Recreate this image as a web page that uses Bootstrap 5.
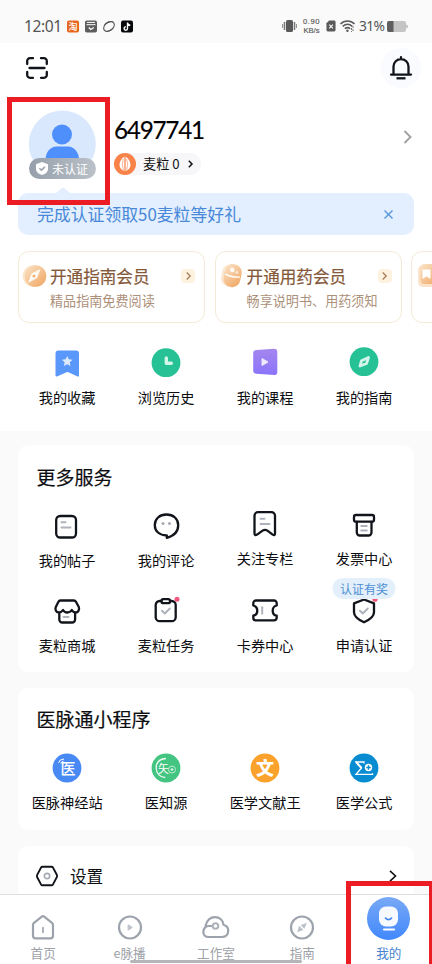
<!DOCTYPE html>
<html lang="zh-CN">
<head>
<meta charset="utf-8">
<meta name="viewport" content="width=device-width, initial-scale=1">
<title>我的</title>
<link href="https://cdn.jsdelivr.net/npm/bootstrap@5.3.0/dist/css/bootstrap.min.css" rel="stylesheet">
<style>
body{font-family:"Noto Sans CJK SC",sans-serif;color:#0c0d10;background:#fff;font-size:14.2px;line-height:20px}
svg{display:block;flex:none;overflow:visible}
.screen{width:432px;height:964px}
.statusbar{height:43px;background:#fafafa;color:#555;font-family:"Noto Sans",sans-serif;padding:9px 24px 0}
.clock{font-size:15.6px;width:41px;letter-spacing:-.4px}
.speed{font-family:"Liberation Sans",sans-serif;font-size:7.6px;width:21px;-webkit-text-stroke:.15px #555}
.speed div{line-height:9px;height:9px}
.speed .rate{letter-spacing:.6px}
.pct{font-size:13.8px;letter-spacing:-.6px;width:28px}
.account{height:388px;padding:0 18px}
.toolbar{height:54px;padding:5px 0 0 8px}
.scan{margin-top:9px}
.bell{width:40px;height:40px;background:#fafbff;margin-right:-7px}
.profile{height:96px;padding-top:13px}
.avatar{width:68px;height:70px;margin-left:10px}
.verify{left:1px;bottom:1px;width:67px;height:21px;border-radius:11px;background:linear-gradient(90deg,#969fab,#bbc1c8);font-size:12px;padding-left:7px}
.who{padding:4px 0 0 18px}
.uid{font-family:Lato,sans-serif;font-size:24.3px;line-height:30px;letter-spacing:-1.25px;color:#000;-webkit-text-stroke:.15px #000;margin-top:1px}
.grains{width:87px;height:22px;background:#f7f7fa;font-size:13.2px;border-radius:11px;margin:8px 0 0;color:#111}
.grains .amount{margin-left:7px}
.more{margin:20px 2px 0 0}
.notice{height:42px;border-radius:10px;background:#e3effe;color:#4888d8;font-size:16.85px;padding:0 17px 0 19px}
.notice-tip{left:37px;top:-6px}
.plans{height:72px;margin-top:16px;margin-right:-18px;gap:9.6px}
.plan{width:187px;height:72px;border:1px solid #f4ead8;border-radius:11px;padding:14px 9px 0 3px}
.plan-icon{margin-top:-2px}
.plan-text{margin-left:2px}
.plan-title{font-size:16.6px;line-height:22px;color:#85583a;font-weight:400;-webkit-text-stroke:.2px #85583a;margin-top:-1px}
.plan-sub{font-size:13.1px;line-height:20px;margin-top:4px;color:#ad907a}
.go{width:14px;height:14px;border-radius:4px;background:#fdf1e0;margin-top:3px}
.tiles{margin-left:-.4px;margin-right:.4px}
.tile{height:60px}
.tile .pic{width:30px;height:30px}
.tile .cap{margin-top:9px;white-space:nowrap}
.quick{margin-top:25px}
.lift{margin-top:-2px}
.feed{background:#fafafa;padding:14px 18px 0}
.panel{background:#fff;border-radius:11px;margin-bottom:16px}
.panel-title{font-size:19px;line-height:24px;font-weight:400;margin:0;padding-left:18.5px;-webkit-text-stroke:.2px #111}
.services{height:227px;padding-top:20px}
.services .tiles{margin-top:22px;row-gap:25px}
.minis{height:142px;padding-top:19px}
.minis .tiles{margin-top:22px}
.prize{top:-18px;left:50%;transform:translateX(-50%);width:63px;height:21px;border-radius:11px;background:#e3effb;color:#4d90d2;font-size:12px;white-space:nowrap}
.setting{height:60px;padding:0 17px 0 18px;font-size:16.6px}
.tabs{height:70px;border-top:1px solid #dcdee1;color:#9da1a8;font-size:12.6px}
.tab-item{width:20%;padding-top:18px}
.tab-item .cap{margin-top:1px;line-height:20px}
.tab-item.on{padding-top:2px;color:#4784cf}
.tab-item.on .cap{margin-top:3px}
.homebar{left:130px;bottom:1px;width:172px;height:3px;border-radius:2px;background:#b4b5b6}
.frame{border:5px solid #eb1c24}
.frame-a{left:7px;top:97px;width:103px;height:108px}
.frame-b{left:346px;top:881px;width:88px;height:90px}
.ln{fill:none;stroke:#11141a;stroke-width:2.3;stroke-linecap:round;stroke-linejoin:round}
.ln.thin{stroke-width:1.9}
.gl{fill:none;stroke:#aeb2bb;stroke-width:2;stroke-linecap:round;stroke-linejoin:round}
.tl{fill:none;stroke:#9da3ad;stroke-width:2.2;stroke-linecap:round;stroke-linejoin:round}
</style>
<script src="https://cdn.jsdelivr.net/npm/bootstrap@5.3.0/dist/js/bootstrap.bundle.min.js"></script>
</head>
<body>
<div class="screen d-flex flex-column position-relative overflow-hidden">

  <header class="statusbar d-flex align-items-center justify-content-between flex-shrink-0">
    <div class="d-flex align-items-center">
      <span class="clock">12:01</span>
      <svg class="ms-1" width="70" height="13" viewBox="0 0 70 13">
        <rect x="-2" y="0.5" width="12" height="12" rx="2" fill="#e8661c"/>
        <text x="-.4" y="10" font-size="9" fill="#fff" font-family="Noto Sans CJK SC" font-weight="500">淘</text>
        <rect x="16" y=".5" width="12" height="12" rx="1.8" fill="#5d5d5d"/><path d="M18 2.4h8M17.5 4.7h9" stroke="#fff" stroke-width="1"/><path d="M19.8 7.5l2 2 3-2" fill="none" stroke="#fff" stroke-width="1.3"/>
        <ellipse cx="40" cy="6.5" rx="6" ry="4" transform="rotate(-38 40 6.500)" fill="none" stroke="#555" stroke-width="1.100"/><path d="M34.500 6C36 2.500 40 .5 44.500 1.300 40.500 2.300 37 3.500 34.500 6zM45.500 6.500C44 10.500 40 12.500 35.500 11.700 39.500 10.800 43 9.300 45.500 6.500z" fill="#555"/>
        <rect x="52" y=".5" width="12" height="12" rx="2" fill="#07080b"/><path d="M58.500 2.500v6a1.700 1.700 0 1 1-1.700-1.700M58.500 2.800c.3 1.500 1.300 2.300 2.800 2.500" fill="none" stroke="#fff" stroke-width="1.400"/>
      </svg>
    </div>
    <div class="d-flex align-items-center">
      <svg class="me-1" width="15" height="12" viewBox="0 0 15 12"><rect x="4" width="7" height="12" rx="1.600" fill="#5a5a5a"/><path d="M2.500 2v8M12.500 2v8" stroke="#777" stroke-width="1.500"/><path d="M.6 4v4M14.400 4v4" stroke="#888" stroke-width="1"/></svg>
      <div class="speed text-center"><div class="rate">0.90</div><div>KB/s</div></div>
      <svg class="ms-1 me-1" width="10" height="12" viewBox="0 0 11 12"><path d="M3.500 0H9a1.500 1.500 0 0 1 1.500 1.500v9A1.500 1.500 0 0 1 9 12H2A1.500 1.500 0 0 1 .5 10.500V3z" fill="#5a5a5a"/><path d="M3.600 4.500l4 4m0-4l-4 4" stroke="#fff" stroke-width="1.200"/></svg>
      <svg class="me-1" width="15" height="12" viewBox="0 0 15 12"><g fill="none" stroke="#5a5a5a" stroke-width="1.500"><path d="M.5 4c4-4 10-4 14 0M2.700 6.400c3-2.700 6.600-2.700 9.600 0M4.800 8.700c2-1.500 3.700-1.500 5.400 0"/></g><circle cx="7.400" cy="10.700" r="1.200" fill="#5a5a5a"/><path d="M13 6v5M11.500 8v4" stroke="#777" stroke-width="1" stroke-dasharray="2 1"/></svg>
      <span class="pct">31%</span>
      <svg width="21" height="11" viewBox="0 0 21 11"><path d="M2 0h15a2 2 0 0 1 2 2v1.500l2 1v2l-2 1V9a2 2 0 0 1-2 2H2a2 2 0 0 1-2-2V2a2 2 0 0 1 2-2z" fill="#c5c5c5"/><path d="M2 0h4.500v11H2a2 2 0 0 1-2-2V2a2 2 0 0 1 2-2z" fill="#5f5f5f"/></svg>
    </div>
  </header>

  <section class="account flex-shrink-0">
    <div class="toolbar d-flex align-items-start justify-content-between">
      <svg class="scan" width="22" height="22" viewBox="0 0 22 22"><g class="ln"><path d="M1.200 7V4a2.800 2.800 0 0 1 2.800-2.800h3M15 1.200h3A2.800 2.800 0 0 1 20.800 4v3M20.800 15v3a2.800 2.800 0 0 1-2.800 2.800h-3M7 20.800H4A2.800 2.800 0 0 1 1.200 18v-3M3.500 11h15"/></g></svg>
      <div class="bell rounded-circle d-flex align-items-center justify-content-center">
        <svg width="22" height="24" viewBox="0 0 22 24"><g class="ln"><path d="M3.500 18v-7.500a7.500 7.500 0 0 1 15 0V18M1 18.600h20M11 1.200v1.600"/><path d="M6.500 22.300h9" stroke-linecap="butt"/></g></svg>
      </div>
    </div>

    <div class="profile d-flex">
      <div class="avatar position-relative flex-shrink-0">
        <svg width="68" height="68" viewBox="0 0 68 68"><circle cx="34.300" cy="34" r="33.500" fill="#d9e8fd"/><circle cx="34" cy="24.500" r="10" fill="#4e8ffb"/><path d="M17.500 50c0-8 5-13.500 11-13.500h11.500c6 0 11 5.500 11 13.500z" fill="#4e8ffb"/></svg>
        <div class="verify position-absolute d-flex align-items-center text-white">
          <svg width="12" height="13" viewBox="0 0 12 13"><path d="M6 0l6 2.300v4.500C12 10 9.500 12 6 13 2.500 12 0 10 0 6.800V2.300z" fill="#fff"/><path d="M3.400 6.200l2 2 3.500-3.300" fill="none" stroke="#9ba3ae" stroke-width="1.600"/></svg>
          <span class="ms-1">未认证</span>
        </div>
      </div>
      <div class="who flex-grow-1">
        <div class="uid">6497741</div>
        <div class="grains d-flex align-items-center">
          <svg width="22" height="22" viewBox="0 0 22 22"><circle cx="11" cy="11" r="11" fill="#f98249"/><path d="M10.400 3.500C7.500 5.500 5.500 8.500 5.500 11.800c0 3.200 2 5.200 4.900 6.200zM11.600 3.500c2.900 2 4.900 5 4.900 8.300 0 3.200-2 5.200-4.900 6.200z" fill="#fff"/><path d="M9.300 6Q7.500 11 9.300 17M12.700 6q1.800 5 0 11" fill="none" stroke="#f98249" stroke-width=".6"/></svg>
          <span class="amount">麦粒 0</span>
          <svg class="ms-2" width="5" height="8" viewBox="0 0 5 8"><path d="M.8.8L4 4 .8 7.200" fill="none" stroke="#111" stroke-width="1.500"/></svg>
        </div>
      </div>
      <svg class="more" width="9" height="14" viewBox="0 0 9 14"><path d="M1.500 1l6 6-6 6" fill="none" stroke="#a2a2a5" stroke-width="1.900"/></svg>
    </div>

    <div class="notice d-flex align-items-center justify-content-between position-relative">
      <svg class="notice-tip position-absolute" width="16" height="7" viewBox="0 0 16 7"><path d="M0 7L6 1.500q2-1.500 4 0L16 7z" fill="#e3effe"/></svg>
      <span>完成认证领取50麦粒等好礼</span>
      <svg class="me-1" width="9" height="9" viewBox="0 0 9 9"><path d="M.5.500l8 8m0-8l-8 8" stroke="#5796dd" stroke-width="1.400"/></svg>
    </div>

    <div class="plans d-flex overflow-hidden">
      <div class="plan d-flex flex-shrink-0">
        <svg class="plan-icon" width="26" height="24" viewBox="0 0 26 24"><defs><linearGradient id="gold" x2="1" y2="1"><stop stop-color="#fae3c8"/><stop offset="1" stop-color="#f0a45e"/></linearGradient></defs><circle cx="11.500" cy="12" r="10.800" fill="#fbe6cc"/><circle cx="13.500" cy="12" r="10.800" fill="url(#gold)"/><path d="M6 19l3.500-9.500L18.500 5 15 14z" fill="#fff" opacity=".9"/><circle cx="12" cy="12" r="1.600" fill="#f1b57b"/></svg>
        <div class="plan-text flex-grow-1"><div class="plan-title">开通指南会员</div><div class="plan-sub text-nowrap">精品指南免费阅读</div></div>
        <div class="go d-flex align-items-center justify-content-center"><svg width="5" height="8" viewBox="0 0 5 8"><path d="M.7.500L4.200 4 .7 7.500" fill="none" stroke="#a77e57" stroke-width="1.300"/></svg></div>
      </div>
      <div class="plan d-flex flex-shrink-0">
        <svg class="plan-icon" width="26" height="24" viewBox="0 0 26 24"><g transform="rotate(12 13 12)"><rect x="2.500" y="1" width="16" height="22" rx="8" fill="#fae7d0"/><rect x="5" y="0" width="17" height="23" rx="8" fill="url(#gold)"/><path d="M6 11.500q7 2 15 0" fill="none" stroke="#fff" stroke-width="1.300"/><circle cx="12" cy="6" r="2.300" fill="#fff" opacity=".9"/><circle cx="17" cy="7.500" r="1.400" fill="#fff" opacity=".7"/></g></svg>
        <div class="plan-text flex-grow-1"><div class="plan-title">开通用药会员</div><div class="plan-sub text-nowrap">畅享说明书、用药须知</div></div>
        <div class="go d-flex align-items-center justify-content-center"><svg width="5" height="8" viewBox="0 0 5 8"><path d="M.7.500L4.200 4 .7 7.500" fill="none" stroke="#a77e57" stroke-width="1.300"/></svg></div>
      </div>
      <div class="plan d-flex flex-shrink-0">
        <svg class="plan-icon" width="26" height="24" viewBox="0 0 26 24"><rect x="3" y="1" width="22" height="22" rx="5" fill="#fae3c8"/><rect x="5.500" y="0" width="21" height="20" rx="4" fill="url(#gold)"/><path d="M7.500 5.500h8V15l-4-2.700-4 2.700z" fill="#fff"/></svg>
      </div>
    </div>

    <div class="quick tiles row g-0 text-center">
      <div class="col-3 tile d-flex flex-column align-items-center">
        <svg class="pic" viewBox="0 0 30 30"><path d="M6.500 2.500h17.500a3 3 0 0 1 3 3V27q0 2.500-2 1.200L17 24.500q-1.500-1-3 0L5.500 28.200q-2 1.200-2-1.200V5.500a3 3 0 0 1 3-3z" fill="#5a97fa"/><path d="M15.200 8l1.600 3.300 3.700.5-2.700 2.500.7 3.600-3.300-1.700-3.300 1.700.7-3.600-2.700-2.500 3.700-.5z" fill="#dceafe"/></svg>
        <div class="cap">我的收藏</div>
      </div>
      <div class="col-3 tile d-flex flex-column align-items-center">
        <svg class="pic" viewBox="0 0 30 30"><circle cx="15" cy="14.700" r="14.400" fill="#27c196"/><path d="M15.300 10v5.300h5" fill="none" stroke="#d3f5ea" stroke-width="3.400" stroke-linecap="round" stroke-linejoin="round"/></svg>
        <div class="cap">浏览历史</div>
      </div>
      <div class="col-3 tile d-flex flex-column align-items-center">
        <svg class="pic" viewBox="0 0 30 30"><defs><linearGradient id="vio" x2="0" y2="1"><stop stop-color="#a486ee"/><stop offset="1" stop-color="#8b74fb"/></linearGradient></defs><path d="M6.500 2L24 .8q3.300 0 3.300 3.300v20q0 3.300-3.300 3L6.500 25.800q-3.300-.3-3.300-3.300V5.300q0-3 3.300-3.300z" fill="url(#vio)"/><path d="M12 10.500v7l6-3.500z" fill="#eee9ff" stroke="#eee9ff" stroke-linejoin="round"/></svg>
        <div class="cap">我的课程</div>
      </div>
      <div class="col-3 tile d-flex flex-column align-items-center">
        <svg class="pic" viewBox="0 0 30 30"><circle cx="15" cy="13.700" r="14.400" fill="#27c196"/><path d="M11 18l1.500-5.300L19.500 9.500l-2 6z" fill="none" stroke="#d3f5ea" stroke-width="2.800" stroke-linejoin="round"/></svg>
        <div class="cap">我的指南</div>
      </div>
    </div>
  </section>

  <main class="feed flex-grow-1 overflow-hidden">
    <section class="panel services">
      <h2 class="panel-title">更多服务</h2>
      <div class="tiles row g-0 text-center">
        <div class="col-3 tile d-flex flex-column align-items-center">
          <svg class="pic" viewBox="0 0 30 30"><rect class="ln" x="4.200" y="5" width="19.800" height="21.500" rx="4"/><path class="gl" d="M9.500 11.300h4M9.500 16.600h9"/></svg>
          <div class="cap">我的帖子</div>
        </div>
        <div class="col-3 tile d-flex flex-column align-items-center">
          <svg class="pic" viewBox="0 0 30 30"><path class="ln" d="M15.500 3.500c7 0 11.700 4.500 11.700 10.700 0 6-4 10.600-11.400 12.600v-2.500C8.300 24.500 3.800 20 3.800 14.200 3.800 8 8.500 3.500 15.500 3.500z"/><circle cx="12" cy="12.500" r="1.500" fill="#a5a9b2"/><circle cx="18.500" cy="12.500" r="1.500" fill="#a5a9b2"/></svg>
          <div class="cap">我的评论</div>
        </div>
        <div class="col-3 tile lift d-flex flex-column align-items-center">
          <svg class="pic" viewBox="0 0 30 30"><path class="ln" d="M8 3.200h13.500a3.500 3.500 0 0 1 3.500 3.500v17.500q0 3-2.300 1.400l-5.300-4q-2.400-1.600-4.800 0l-5.500 4q-2.600 1.600-2.600-1.400V6.700A3.500 3.500 0 0 1 8 3.200z"/><path class="gl" d="M10.500 9.800h4M10.500 15h9"/></svg>
          <div class="cap">关注专栏</div>
        </div>
        <div class="col-3 tile lift d-flex flex-column align-items-center">
          <svg class="pic" viewBox="0 0 30 30"><rect class="ln" x="5" y="6" width="20" height="6.700" rx="2"/><path class="ln" d="M7.800 13v10.500a3 3 0 0 0 3 3h8.700a3 3 0 0 0 3-3V13"/><path class="gl" d="M12.300 17h5.500M12.300 21.500h5.500"/></svg>
          <div class="cap">发票中心</div>
        </div>
        <div class="col-3 tile d-flex flex-column align-items-center">
          <svg class="pic" viewBox="0 0 30 30"><path class="ln" d="M8.500 4.500h13.200q1.600 0 2.400 1.500l2.700 5c1 3-.8 5.500-3 5.500-2.300 0-3.200-1-4-2.500-1 1.600-2.400 2.500-4.500 2.500s-3.500-1-4.300-2.500c-1 1.600-2.300 2.500-4.200 2.500-2.700 0-4-2.700-3-5.500l2.500-5q.7-1.500 2.200-1.500zM7.300 17v6.500a3 3 0 0 0 3 3h9.800a3 3 0 0 0 3-3V17"/><path class="gl" d="M11.500 21h5"/></svg>
          <div class="cap">麦粒商城</div>
        </div>
        <div class="col-3 tile d-flex flex-column align-items-center">
          <svg class="pic" viewBox="0 0 30 30"><path class="ln" d="M10.500 5H8.700a4 4 0 0 0-4 4v12.200a4 4 0 0 0 4 4h12a4 4 0 0 0 4-4V9a4 4 0 0 0-4-4h-1.700"/><rect class="ln" x="10.500" y="3.200" width="8.500" height="4" rx="1.800"/><path class="gl" d="M11 14.800l2.800 2.700 5-5"/><circle cx="26" cy="3.300" r="2.500" fill="#f0587c"/></svg>
          <div class="cap">麦粒任务</div>
        </div>
        <div class="col-3 tile d-flex flex-column align-items-center">
          <svg class="pic" viewBox="0 0 30 30"><path class="ln" d="M6 4.500h18a2.700 2.700 0 0 1 2.700 2.700v2.300c-2.700.6-4 2.500-4 5.200s1.300 4.500 4 5v2a2.700 2.700 0 0 1-2.700 2.700H6a2.700 2.700 0 0 1-2.700-2.700v-2c2.700-.5 4-2.200 4-5s-1.300-4.500-4-5.200V7.200A2.700 2.700 0 0 1 6 4.500z"/><path class="gl" d="M12.200 11.300v6.500"/></svg>
          <div class="cap">卡券中心</div>
        </div>
        <div class="col-3 tile position-relative d-flex flex-column align-items-center">
          <svg class="pic" viewBox="0 0 30 30"><path class="ln" d="M15 3.500l10 3.800v9c0 4.500-4.500 7.500-10 10-5.500-2.500-10-5.500-10-10v-9z"/><path class="gl" d="M11 14.800l2.800 2.700 5-5"/><circle cx="26" cy="3.200" r="2.600" fill="#f0587c"/></svg>
          <div class="prize position-absolute d-flex align-items-center justify-content-center">认证有奖</div>
          <div class="cap">申请认证</div>
        </div>
      </div>
    </section>

    <section class="panel minis">
      <h2 class="panel-title">医脉通小程序</h2>
      <div class="tiles row g-0 text-center">
        <div class="col-3 tile d-flex flex-column align-items-center">
          <svg class="pic" viewBox="0 0 30 30"><circle cx="15" cy="15" r="14.400" fill="#4889f4"/><text x="8.500" y="21" font-size="15" fill="#fff" font-weight="500" font-family="Noto Sans CJK SC">医</text><path d="M6.500 10q1-4 5.500-4M8.800 10.500q.5-2 2.700-2.300" fill="none" stroke="#fff" stroke-width="1"/></svg>
          <div class="cap">医脉神经站</div>
        </div>
        <div class="col-3 tile d-flex flex-column align-items-center">
          <svg class="pic" viewBox="0 0 30 30"><circle cx="15" cy="15" r="14.400" fill="#43c481"/><path d="M15 5.500C8 6 5 10 5.200 15.500c.2 5 4 9 9 9" fill="none" stroke="#effbf5" stroke-width="1.300"/><text x="7" y="19.500" font-size="11" fill="#fff" font-family="Noto Sans CJK SC">矢</text><circle cx="21" cy="16.500" r="3.500" fill="none" stroke="#b9ead0"/><path d="M19.500 16.500h3M21 15v3" stroke="#d8f4e5" stroke-width="1.200"/></svg>
          <div class="cap">医知源</div>
        </div>
        <div class="col-3 tile d-flex flex-column align-items-center">
          <svg class="pic" viewBox="0 0 30 30"><circle cx="15" cy="15" r="14.400" fill="#fba22c"/><text x="6" y="21.500" font-size="18" fill="#fff" font-weight="900" font-family="Noto Sans CJK SC">文</text></svg>
          <div class="cap">医学文献王</div>
        </div>
        <div class="col-3 tile d-flex flex-column align-items-center">
          <svg class="pic" viewBox="0 0 30 30"><circle cx="15" cy="15" r="14.400" fill="#078bd1"/><path d="M15 10.500V9H7l5.500 6L7 21.300h16.500v-1" fill="none" stroke="#fff" stroke-width="1.300"/><path d="M7 9l5.500 6" stroke="#fff" stroke-width="2"/><circle cx="19.500" cy="14.500" r="3.700" fill="#fff"/><path d="M17.300 14.500h4.400M19.500 12.300v4.400" stroke="#078bd1" stroke-width="1.400"/></svg>
          <div class="cap">医学公式</div>
        </div>
      </div>
    </section>

    <section class="panel setting d-flex align-items-center">
      <svg width="22" height="22" viewBox="0 0 22 22"><path class="ln thin" d="M6.500 1.800h9q1 0 1.500.8l3.800 7.200q.6 1.200 0 2.400L17 19.400q-.5.800-1.500.8h-9q-1 0-1.500-.8L1.200 12.200q-.6-1.200 0-2.400L5 2.600q.5-.8 1.500-.8z"/><circle cx="11" cy="11" r="2.700" fill="none" stroke="#a7abb3" stroke-width="1.700"/></svg>
      <span class="flex-grow-1 ms-2 ps-1">设置</span>
      <svg width="8" height="12" viewBox="0 0 8 12"><path d="M1 .8L6.500 6 1 11.200" fill="none" stroke="#111" stroke-width="1.600"/></svg>
    </section>
  </main>

  <nav class="tabs d-flex flex-shrink-0 bg-white text-center">
    <div class="tab-item d-flex flex-column align-items-center">
      <svg width="30" height="29" viewBox="0 0 30 29"><path class="tl" d="M16.500 3.800l7.500 6q1 .8 1 2.200v10.800q0 2.500-2.500 2.500H7.500q-2.500 0-2.500-2.500V12q0-1.400 1-2.200l7.500-6q1.500-1.200 3 0z"/><path class="gl" d="M15 14.800v4.500"/></svg>
      <div class="cap">首页</div>
    </div>
    <div class="tab-item d-flex flex-column align-items-center">
      <svg width="30" height="29" viewBox="0 0 30 29"><circle class="tl" cx="15" cy="14.500" r="11"/><path d="M13.200 12v5l3.800-2.500z" fill="#bfc3ca" stroke="#bfc3ca" stroke-width="1.200" stroke-linejoin="round"/></svg>
      <div class="cap">e脉播</div>
    </div>
    <div class="tab-item d-flex flex-column align-items-center">
      <svg width="30" height="29" viewBox="0 0 30 29"><path class="tl" d="M4.500 13C6 7 9.500 4.200 14 4.200c4.700 0 8 3 8.500 7.500 3 .7 4.700 3 4.700 6 0 4-2.700 6.300-6.500 6.300H7.800c-4 0-5.500-2.400-5.500-5 0-3.700 2.500-6 5.500-6h3"/><circle class="gl" cx="14.500" cy="13" r="2.800"/></svg>
      <div class="cap">工作室</div>
    </div>
    <div class="tab-item d-flex flex-column align-items-center">
      <svg width="30" height="29" viewBox="0 0 30 29"><circle class="tl" cx="15" cy="14.500" r="11"/><path d="M19.800 9.700l-7 2.800 4.200 4.200zM10.200 19.300l2-7 4.800 4.400z" fill="#bcc0c7"/><path d="M11.500 11l7 7" stroke="#fff" stroke-width="1.500"/></svg>
      <div class="cap">指南</div>
    </div>
    <div class="tab-item on d-flex flex-column align-items-center">
      <svg width="43" height="43" viewBox="0 0 43 43"><defs><linearGradient id="blu" x2="0" y2="1"><stop stop-color="#78a9f5"/><stop offset="1" stop-color="#4188fd"/></linearGradient></defs><circle cx="21.500" cy="21.500" r="21.500" fill="url(#blu)"/><rect x="12" y="9.500" width="19" height="20" rx="7" fill="#f6faff"/><path d="M18.500 21.200q3 3 6 0" fill="none" stroke="#4185e9" stroke-width="1.700" stroke-linecap="round"/><path d="M17 32.500h10" stroke="#fff" stroke-width="2.200" stroke-linecap="round"/></svg>
      <div class="cap">我的</div>
    </div>
  </nav>

  <div class="homebar position-absolute"></div>
  <div class="frame frame-a position-absolute"></div>
  <div class="frame frame-b position-absolute"></div>
</div>
</body>
</html>
